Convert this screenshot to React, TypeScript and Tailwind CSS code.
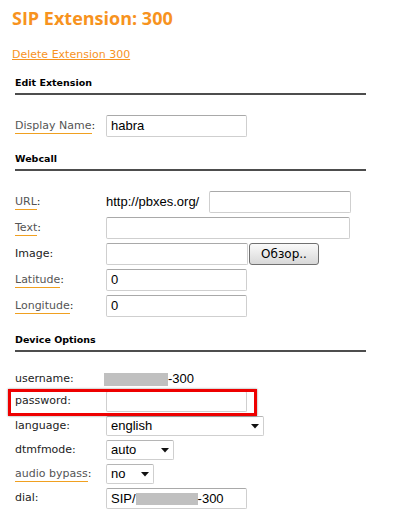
import React from "react";

const LBL = "font-['DejaVu_Sans',sans-serif] text-[11px]";
const VAL = "font-['Liberation_Sans',Arial,sans-serif] text-[13px] text-black";
const INPUT =
  "h-full border border-[#cfcfcf] border-t-[#a9a9a9] rounded-[2px] bg-white pl-[4px] flex items-center " + VAL;

function ULabel({ text }: { text: string }) {
  return (
    <div className={"w-[91px] shrink-0 text-[#555] " + LBL}>
      <span className="border-b border-[#f0a020] pb-[1px] leading-[13px]">{text}</span>
      <span className="text-[#222]">:</span>
    </div>
  );
}

function PLabel({ text }: { text: string }) {
  return <div className={"w-[91px] shrink-0 text-[#222] " + LBL}>{text}:</div>;
}

function Header({ title, className }: { title: string; className: string }) {
  return (
    <div className={className}>
      <div className="font-['DejaVu_Sans',sans-serif] font-bold text-[9.5px] leading-[12px] text-black pb-[4px] border-b-2 border-[#4d4d4d]">
        {title}
      </div>
    </div>
  );
}

function Arrow() {
  return (
    <svg width="8" height="5" viewBox="0 0 8 5" className="shrink-0">
      <path d="M0 0 L8 0 L4 4.5 Z" fill="#111" />
    </svg>
  );
}

function Select({ value, width }: { value: string; width: number }) {
  return (
    <div
      className={"h-full border border-[#cfcfcf] border-t-[#b5b5b5] rounded-[2px] bg-white pl-[4px] pr-[4px] flex items-center justify-between " + VAL}
      style={{ width }}
    >
      <span>{value}</span>
      <Arrow />
    </div>
  );
}

export default function App() {
  return (
    <div className="w-[396px] h-[519px] bg-white overflow-hidden pl-[12px] pt-[8px]">
      <div className="font-['Open_Sans',sans-serif] font-bold text-[18px] leading-[21px] text-[#f7931e]">
        SIP Extension: 300
      </div>
      <div className="mt-[17px] leading-[13px]">
        <span className="font-['DejaVu_Sans',sans-serif] text-[11px] text-[#f7931e] underline">
          Delete Extension 300
        </span>
      </div>

      <div className="ml-[3px] w-[351px]">
        <Header title="Edit Extension" className="mt-[16px]" />
        <div className="mt-[20px] h-[22px] flex items-center">
          <ULabel text="Display Name" />
          <div className={INPUT + " w-[141px]"}>habra</div>
        </div>

        <Header title="Webcall" className="mt-[16px]" />
        <div className="mt-[20px] flex flex-col gap-[4px]">
          <div className="h-[22px] flex items-center">
            <ULabel text="URL" />
            <span className={VAL + " w-[103px]"}>http://pbxes.org/</span>
            <div className={INPUT + " w-[142px]"}></div>
          </div>
          <div className="h-[22px] flex items-center">
            <ULabel text="Text" />
            <div className={INPUT + " w-[244px]"}></div>
          </div>
          <div className="h-[22px] flex items-center">
            <PLabel text="Image" />
            <div className={INPUT + " w-[142px]"}></div>
            <div className="ml-[1px] h-[22px] w-[70px] rounded-[3px] border border-[#707070] bg-gradient-to-b from-[#fafafa] to-[#d8d8d8] flex items-center justify-center font-['DejaVu_Sans',sans-serif] text-[12px] text-black">
              Обзор..
            </div>
          </div>
          <div className="h-[22px] flex items-center">
            <ULabel text="Latitude" />
            <div className={INPUT + " w-[141px]"}>0</div>
          </div>
          <div className="h-[22px] flex items-center">
            <ULabel text="Longitude" />
            <div className={INPUT + " w-[141px]"}>0</div>
          </div>
        </div>

        <Header title="Device Options" className="mt-[17px]" />
        <div className="mt-[17px] h-[20px] flex items-center">
          <PLabel text="username" />
          <div className="-ml-[2px] h-[13px] w-[64px] bg-[#c0c0c0]"></div>
          <span className={VAL}>-300</span>
        </div>
        <div className="mt-[2px] flex flex-col gap-[4px]">
          <div className="relative h-[21px] flex items-center">
            <PLabel text="password" />
            <div className={INPUT + " w-[141px]"}></div>
            <div className="absolute left-[-7px] top-[-2px] w-[249px] h-[27px] border-[3px] border-[#ee0000] shadow-[0_0_2px_rgba(0,0,0,0.45)]"></div>
          </div>
          <div className="h-[20px] flex items-center">
            <PLabel text="language" />
            <Select value="english" width={158} />
          </div>
          <div className="h-[20px] flex items-center">
            <PLabel text="dtmfmode" />
            <Select value="auto" width={68} />
          </div>
          <div className="h-[20px] flex items-center">
            <ULabel text="audio bypass" />
            <Select value="no" width={48} />
          </div>
          <div className="h-[21px] flex items-center">
            <PLabel text="dial" />
            <div className={INPUT + " w-[141px]"}>
              <span>SIP/</span>
              <span className="inline-block h-[12px] w-[62px] bg-[#c0c0c0]"></span>
              <span>-300</span>
            </div>
          </div>
        </div>
      </div>
    </div>
  );
}
